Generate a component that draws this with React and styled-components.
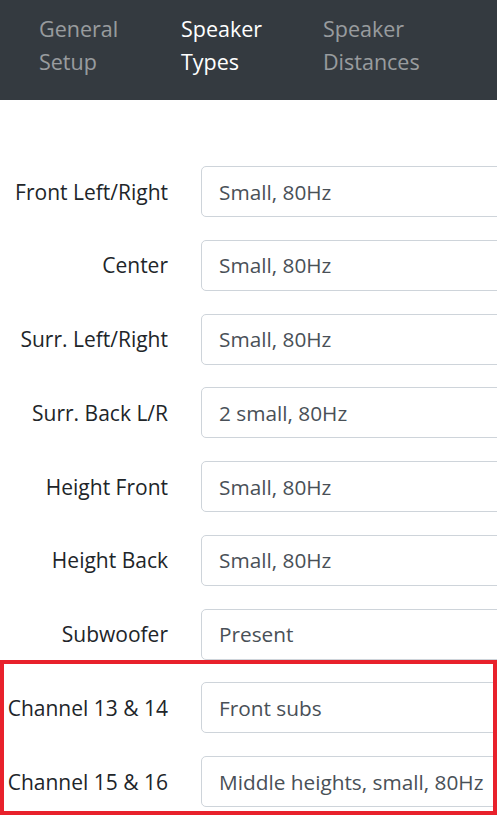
import React from 'react';
import styled, { createGlobalStyle } from 'styled-components';

const GlobalStyle = createGlobalStyle`
  html, body {
    margin: 0;
    padding: 0;
    background: #fff;
    overflow: hidden;
  }
  body {
    font-family: "Open Sans", "Noto Sans", sans-serif;
    color: #212529;
  }
`;

const Page = styled.div`
  position: relative;
  width: 497px;
  height: 820px;
  overflow: hidden;
`;

const NavBar = styled.nav`
  height: 100px;
  background: #343a40;
  display: flex;
  padding: 12px 0 0 39px;
  box-sizing: border-box;
`;

const NavItem = styled.div`
  width: 142px;
  flex: none;
`;

const NavText = styled.span`
  display: block;
  max-width: 100px;
  font-size: 21.5px;
  line-height: 33px;
  color: ${(p) => (p.$active ? '#ffffff' : 'rgba(255,255,255,0.5)')};
`;

const Form = styled.div`
  display: flex;
  flex-direction: column;
  gap: 22.75px;
  padding-top: 66px;
`;

const Row = styled.div`
  display: grid;
  grid-template-columns: 168px 360px;
  column-gap: 33px;
  align-items: center;
`;

const Label = styled.label`
  text-align: right;
  font-size: 21px;
  white-space: nowrap;
  color: #212529;
`;

const Field = styled.div`
  height: 51px;
  box-sizing: border-box;
  border: 1px solid #ced4da;
  border-radius: 5px;
  padding: 0 17px;
  display: flex;
  align-items: center;
  font-size: 20.8px;
  color: #495057;
  white-space: nowrap;
`;

const Highlight = styled.div`
  position: absolute;
  left: 0;
  top: 660px;
  width: 497px;
  height: 155px;
  box-sizing: border-box;
  border: 4px solid #e8212b;
  pointer-events: none;
`;

const rows = [
  ['Front Left/Right', 'Small, 80Hz'],
  ['Center', 'Small, 80Hz'],
  ['Surr. Left/Right', 'Small, 80Hz'],
  ['Surr. Back L/R', '2 small, 80Hz'],
  ['Height Front', 'Small, 80Hz'],
  ['Height Back', 'Small, 80Hz'],
  ['Subwoofer', 'Present'],
  ['Channel 13 & 14', 'Front subs'],
  ['Channel 15 & 16', 'Middle heights, small, 80Hz'],
];

const tabs = [
  ['General Setup', false],
  ['Speaker Types', true],
  ['Speaker Distances', false],
];

const App = () => {
  return (
    <Page>
      <GlobalStyle />
      <NavBar>
        {tabs.map(([name, active]) => (
          <NavItem key={name}>
            <NavText $active={active}>{name}</NavText>
          </NavItem>
        ))}
      </NavBar>
      <Form>
        {rows.map(([label, value]) => (
          <Row key={label}>
            <Label>{label}</Label>
            <Field>{value}</Field>
          </Row>
        ))}
      </Form>
      <Highlight />
    </Page>
  );
};

export default App;
